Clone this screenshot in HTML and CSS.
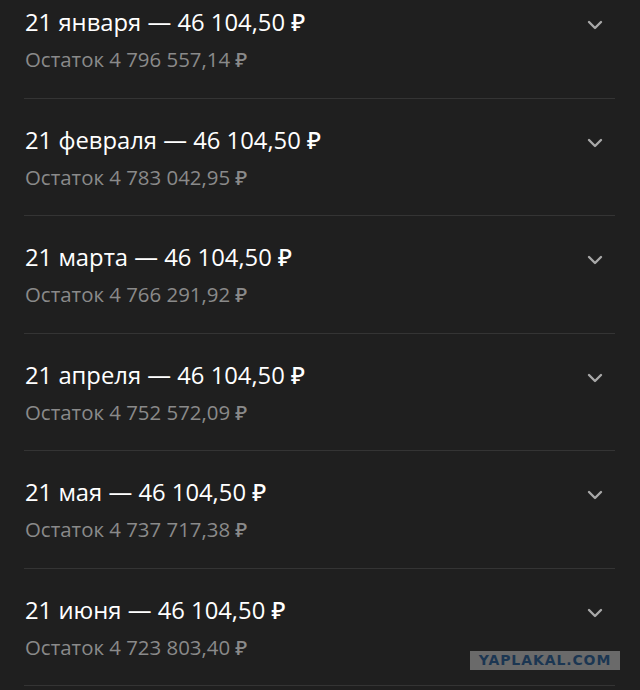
FILE: index.html
```html
<!DOCTYPE html>
<html lang="ru">
<head>
<meta charset="utf-8">
<link rel="stylesheet" href="styles.css">
</head>
<body>
<main class="page">
  <ul class="list">
    <li class="row">
      <div class="text">
        <div class="title">21 января — 46 104,50 ₽</div>
        <div class="sub">Остаток 4 796 557,14 ₽</div>
      </div>
      <svg class="chev" viewBox="0 0 16 10" width="16" height="10"><path d="M2 2 L8 8 L14 2" fill="none" stroke="#a8a8a8" stroke-width="2.4" stroke-linecap="round" stroke-linejoin="round"/></svg>
    </li>
    <li class="row">
      <div class="text">
        <div class="title">21 февраля — 46 104,50 ₽</div>
        <div class="sub">Остаток 4 783 042,95 ₽</div>
      </div>
      <svg class="chev" viewBox="0 0 16 10" width="16" height="10"><path d="M2 2 L8 8 L14 2" fill="none" stroke="#a8a8a8" stroke-width="2.4" stroke-linecap="round" stroke-linejoin="round"/></svg>
    </li>
    <li class="row">
      <div class="text">
        <div class="title">21 марта — 46 104,50 ₽</div>
        <div class="sub">Остаток 4 766 291,92 ₽</div>
      </div>
      <svg class="chev" viewBox="0 0 16 10" width="16" height="10"><path d="M2 2 L8 8 L14 2" fill="none" stroke="#a8a8a8" stroke-width="2.4" stroke-linecap="round" stroke-linejoin="round"/></svg>
    </li>
    <li class="row">
      <div class="text">
        <div class="title">21 апреля — 46 104,50 ₽</div>
        <div class="sub">Остаток 4 752 572,09 ₽</div>
      </div>
      <svg class="chev" viewBox="0 0 16 10" width="16" height="10"><path d="M2 2 L8 8 L14 2" fill="none" stroke="#a8a8a8" stroke-width="2.4" stroke-linecap="round" stroke-linejoin="round"/></svg>
    </li>
    <li class="row">
      <div class="text">
        <div class="title">21 мая — 46 104,50 ₽</div>
        <div class="sub">Остаток 4 737 717,38 ₽</div>
      </div>
      <svg class="chev" viewBox="0 0 16 10" width="16" height="10"><path d="M2 2 L8 8 L14 2" fill="none" stroke="#a8a8a8" stroke-width="2.4" stroke-linecap="round" stroke-linejoin="round"/></svg>
    </li>
    <li class="row">
      <div class="text">
        <div class="title">21 июня — 46 104,50 ₽</div>
        <div class="sub">Остаток 4 723 803,40 ₽</div>
      </div>
      <svg class="chev" viewBox="0 0 16 10" width="16" height="10"><path d="M2 2 L8 8 L14 2" fill="none" stroke="#a8a8a8" stroke-width="2.4" stroke-linecap="round" stroke-linejoin="round"/></svg>
    </li>
  </ul>
  <div class="watermark">YAPLAKAL.COM</div>
</main>
</body>
</html>
```

FILE: styles.css
```css
html, body {
  margin: 0;
  padding: 0;
  background: #1f1f1f;
  height: 100%;
  overflow: hidden;
}
.page {
  position: relative;
  width: 640px;
  height: 690px;
  overflow: hidden;
  font-family: "Open Sans", "Noto Sans", sans-serif;
}
.list {
  list-style: none;
  margin: -19px 0 0 0;
  padding: 0;
}
.row {
  display: flex;
  justify-content: space-between;
  align-items: flex-start;
  margin: 0 25px 0 24px;
  height: 116.5px;
  border-bottom: 1px solid #343434;
  box-sizing: content-box;
}
.text {
  padding-top: 25px;
  display: flex;
  flex-direction: column;
  gap: 8px;
}
.title {
  color: #ffffff;
  font-size: 23.8px;
  font-weight: 500;
  line-height: 32px;
  padding-left: 1px;
}
.sub {
  color: #8a8a8a;
  font-size: 20.4px;
  font-weight: 500;
  line-height: 27px;
  padding-left: 1px;
}
.chev {
  margin-top: 39px;
  margin-right: 12px;
}
.watermark {
  position: absolute;
  left: 470px;
  top: 651px;
  width: 150px;
  height: 19px;
  background: #6a6a6a;
  color: #1b3652;
  font-family: "DejaVu Sans", sans-serif;
  font-weight: bold;
  font-size: 14px;
  line-height: 19px;
  text-align: center;
  letter-spacing: 0.9px;
}
```
